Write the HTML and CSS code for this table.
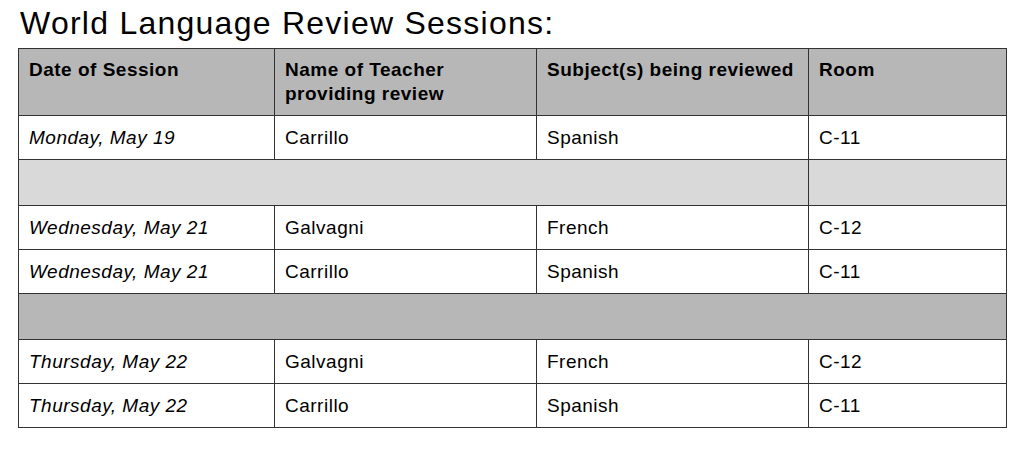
FILE: index.html
```html
<!DOCTYPE html>
<html lang="en">
<head>
<meta charset="utf-8">
<title>World Language Review Sessions</title>
<link rel="stylesheet" href="styles.css">
</head>
<body>
<main class="page">
  <h1 class="title">World Language Review Sessions:</h1>
  <table class="sessions">
    <colgroup>
      <col class="c-date">
      <col class="c-teacher">
      <col class="c-subject">
      <col class="c-room">
    </colgroup>
    <thead>
      <tr class="head-row">
        <th>Date of Session</th>
        <th>Name of Teacher providing review</th>
        <th>Subject(s) being reviewed</th>
        <th>Room</th>
      </tr>
    </thead>
    <tbody>
      <tr class="row">
        <td class="date">Monday, May 19</td>
        <td>Carrillo</td>
        <td>Spanish</td>
        <td>C-11</td>
      </tr>
      <tr class="sep sep-light">
        <td colspan="3"></td>
        <td></td>
      </tr>
      <tr class="row">
        <td class="date">Wednesday, May 21</td>
        <td>Galvagni</td>
        <td>French</td>
        <td>C-12</td>
      </tr>
      <tr class="row">
        <td class="date">Wednesday, May 21</td>
        <td>Carrillo</td>
        <td>Spanish</td>
        <td>C-11</td>
      </tr>
      <tr class="sep sep-dark">
        <td colspan="4"></td>
      </tr>
      <tr class="row">
        <td class="date">Thursday, May 22</td>
        <td>Galvagni</td>
        <td>French</td>
        <td>C-12</td>
      </tr>
      <tr class="row">
        <td class="date">Thursday, May 22</td>
        <td>Carrillo</td>
        <td>Spanish</td>
        <td>C-11</td>
      </tr>
    </tbody>
  </table>
</main>
</body>
</html>
```

FILE: styles.css
```css
html, body {
  margin: 0;
  padding: 0;
  background: #ffffff;
}

body {
  font-family: "Liberation Sans", Arial, Helvetica, sans-serif;
  color: #000000;
}

.page {
  padding: 4px 24px 0 18px;
}

.title {
  margin: 0 0 6px 2px;
  font-size: 32px;
  letter-spacing: 1.25px;
  font-weight: normal;
  line-height: 38px;
  height: 38px;
}

.sessions {
  border-collapse: collapse;
  table-layout: fixed;
  width: 988px;
  font-size: 19px;
  letter-spacing: 0.5px;
}

.c-date { width: 256px; }
.c-teacher { width: 262px; }
.c-subject { width: 272px; }
.c-room { width: 198px; }

.sessions th,
.sessions td {
  border: 1px solid #333333;
  padding: 0 10px;
  text-align: left;
  line-height: 24px;
}

.head-row th {
  background: #b7b7b7;
  font-weight: bold;
  vertical-align: top;
  height: 67px;
  padding-top: 9px;
  padding-bottom: 0;
  box-sizing: border-box;
}

.row td {
  height: 43px;
  vertical-align: middle;
}

.date {
  font-style: italic;
}

.sep td {
  height: 45px;
}

.sep-light td {
  background: #d9d9d9;
}

.sep-dark td {
  background: #b7b7b7;
}
```
